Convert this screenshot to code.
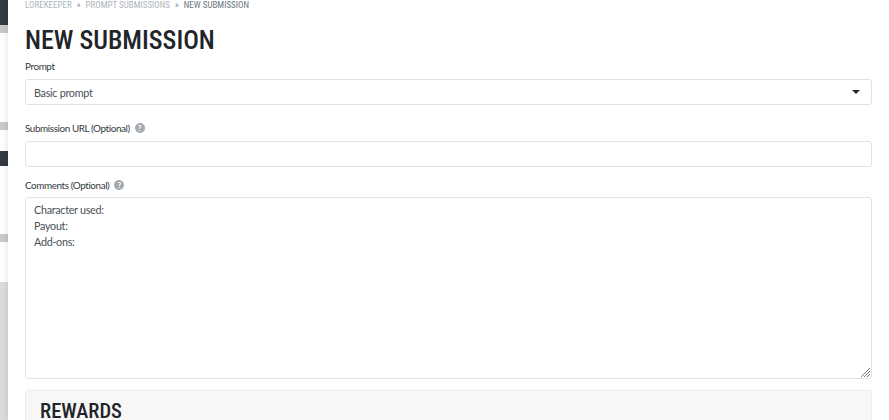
<style>
  :global(body) { margin: 0; background: #fff; overflow: hidden; }
  .page { display: flex; height: 420px; width: 889px; overflow: hidden; font-family: Lato, "Open Sans", sans-serif; color: #212529; }
  .rail { width: 8px; flex: none; display: flex; flex-direction: column; background: #fff; }
  .dark { background: #343a40; }
  .grey { background: #c9c9c9; }
  .gap { background: #fff; }
  .fill { flex: 1; background: #dcdcdc; }
  .main { flex: 1; min-width: 0; padding: 0 17px 0 17px; box-shadow: 0 0 8px rgba(0,0,0,.12); position: relative; }
  .crumbs { height: 11px; font: 400 9px/11px Roboto, sans-serif; font-stretch: 75%; color: #adb5bd; text-transform: uppercase; display: flex; gap: 5px; white-space: nowrap; }
  .crumbs .now { color: #6c757d; }
  .crumbs .sep { color: #868e96; }
  h1 { margin: 14px 0 0; font: 500 26px/30px Roboto, sans-serif; font-stretch: 75%; color: #212529; text-transform: uppercase; white-space: nowrap; }
  label { display: flex; align-items: center; gap: 5px; font-size: 9.9px; letter-spacing: -.4px; line-height: 16px; color: #343a40; }
  .l1 { margin-top: 3px; }
  .l2 { margin-top: 15px; }
  .l3 { margin-top: 10px; }
  .q { width: 10px; height: 10px; border-radius: 50%; background: #a3a9ae; color: #fff; font: 700 8px/10px Lato, sans-serif; letter-spacing: 0; text-align: center; }
  .field { box-sizing: border-box; border: 1px solid #dee2e6; border-radius: 3px; background: #fff; font-size: 10.8px; letter-spacing: -.3px; color: #495057; }
  .select { margin-top: 5px; height: 26px; display: flex; align-items: center; justify-content: space-between; padding: 0 11px 0 8px; }
  .caret { width: 0; height: 0; border-left: 4px solid transparent; border-right: 4px solid transparent; border-top: 4px solid #212529; }
  .input { margin-top: 5px; height: 26px; }
  .area { margin-top: 4px; height: 182px; padding: 4px 8px; line-height: 16px; position: relative; }
  .grip { position: absolute; right: 0; bottom: 0; }
  .card { box-sizing: border-box; margin-top: 11px; height: 60px; background: #f7f7f7; border: 1px solid #ececec; border-radius: 3px; padding: 11px 14px 0; }
  h2 { margin: 0; font: 500 20.5px/18px Roboto, sans-serif; font-stretch: 75%; color: #212529; }
</style>

<div class="page">
  <div class="rail">
    <div class="dark" style="height:25px"></div>
    <div class="grey" style="height:8px"></div>
    <div class="gap" style="height:89px"></div>
    <div class="grey" style="height:8px"></div>
    <div class="gap" style="height:21px"></div>
    <div class="dark" style="height:15px"></div>
    <div class="gap" style="height:68px"></div>
    <div class="grey" style="height:8px"></div>
    <div class="gap" style="height:40px"></div>
    <div class="fill"></div>
  </div>
  <div class="main">
    <div class="crumbs"><span>Lorekeeper</span><span class="sep">»</span><span>Prompt Submissions</span><span class="sep">»</span><span class="now">New Submission</span></div>
    <h1>New Submission</h1>
    <label class="l1">Prompt</label>
    <div class="field select"><span>Basic prompt</span><span class="caret"></span></div>
    <label class="l2">Submission URL (Optional) <span class="q">?</span></label>
    <div class="field input"></div>
    <label class="l3">Comments (Optional) <span class="q">?</span></label>
    <div class="field area">
      Character used:<br />Payout:<br />Add-ons:
      <svg class="grip" width="11" height="11" viewBox="0 0 11 11"><path d="M1 10 10 1M4 10 10 4M7 10 10 7" stroke="#777" stroke-width="1" fill="none" /></svg>
    </div>
    <div class="card"><h2>REWARDS</h2></div>
  </div>
</div>
